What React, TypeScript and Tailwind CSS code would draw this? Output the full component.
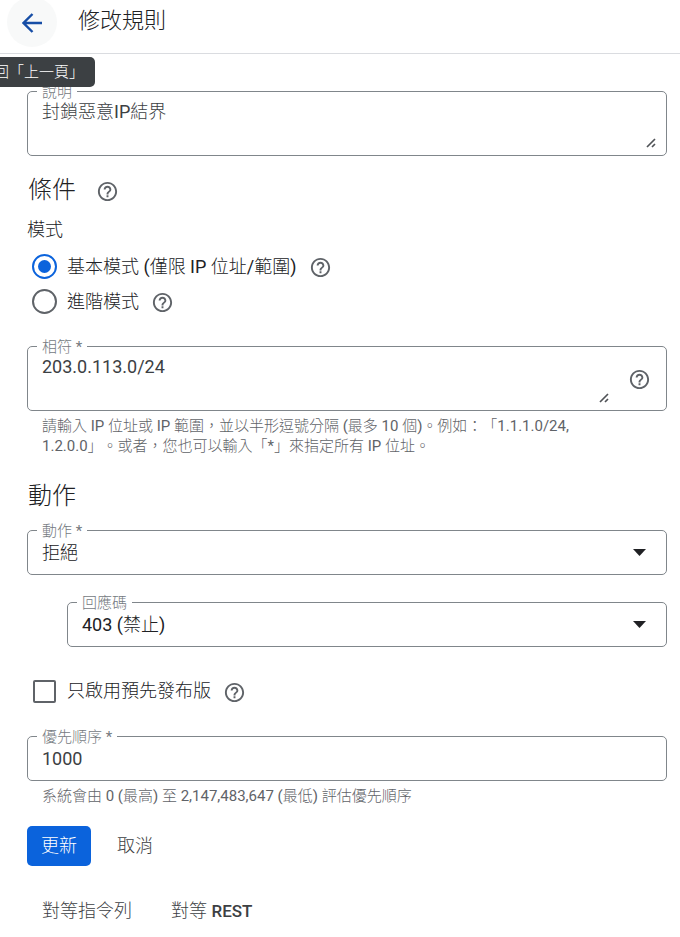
import { useState, type ReactNode } from "react";

function HelpIcon() {
  return (
    <svg viewBox="0 0 24 24" className="size-[23px] fill-[#5f6368]" aria-hidden="true">
      <path d="M11 18h2v-2h-2v2zm1-16C6.48 2 2 6.48 2 12s4.48 10 10 10 10-4.48 10-10S17.52 2 12 2zm0 18c-4.41 0-8-3.59-8-8s3.59-8 8-8 8 3.59 8 8-3.59 8-8 8zm0-14c-2.21 0-4 1.79-4 4h2c0-1.1.9-2 2-2s2 .9 2 2c0 2-3 1.75-3 5h2c0-2.25 3-2.5 3-5 0-2.21-1.79-4-4-4z" />
    </svg>
  );
}

function HelpButton({ label }: { label: string }) {
  return (
    <button type="button" aria-label={label} className="shrink-0 pt-[2px]">
      <HelpIcon />
    </button>
  );
}

function Resizer({ className }: { className: string }) {
  return (
    <svg
      viewBox="0 0 10 10"
      className={`pointer-events-none absolute bottom-[7px] size-[10px] ${className}`}
      aria-hidden="true"
    >
      <path d="M1 9L9 1M6 9L9 6" stroke="#505357" strokeWidth="1.7" fill="none" />
    </svg>
  );
}

function Field({ id, label, children }: { id: string; label: string; children: ReactNode }) {
  return (
    <div className="relative flex rounded-[5px] border border-[#80868b]">
      <label
        htmlFor={id}
        className="absolute -top-[9px] left-[9px] bg-white px-[5px] text-[15px] leading-[18px] text-[#74797e]"
      >
        {label}
      </label>
      {children}
    </div>
  );
}

function SelectField({ id, label, options }: { id: string; label: string; options: string[] }) {
  return (
    <Field id={id} label={label}>
      <select
        id={id}
        className="h-[43px] w-full appearance-none rounded-[5px] bg-transparent px-[14px] text-[18px] text-[#202124] outline-none"
      >
        {options.map((o) => (
          <option key={o}>{o}</option>
        ))}
      </select>
      <svg
        viewBox="0 0 12 6"
        className="pointer-events-none absolute top-[18px] right-5 h-[7px] w-[13px] fill-[#202124]"
        preserveAspectRatio="none"
        aria-hidden="true"
      >
        <path d="M0 0h12L6 6z" />
      </svg>
    </Field>
  );
}

const modes = [
  { id: "basic", label: "基本模式 (僅限 IP 位址/範圍)" },
  { id: "advanced", label: "進階模式" },
];

export default function App() {
  const [mode, setMode] = useState("basic");
  return (
    <div
      lang="zh-Hant"
      className="min-h-screen overflow-hidden bg-white font-[Roboto,'Noto_Sans_CJK_TC_Light','Noto_Sans_CJK_TC',sans-serif] font-normal text-[#202124] [text-spacing-trim:space-all]"
    >
      <header className="relative flex h-[54px] items-start border-b border-[#dadce0] pl-[7px]">
        <button
          type="button"
          aria-label="返回"
          aria-describedby="back-tip"
          className="-mt-[3px] flex size-[50px] items-center justify-center rounded-full bg-[#f8f9f9]"
        >
          <svg viewBox="0 0 20 20" className="mt-px size-5" aria-hidden="true">
            <path d="M20 10H2M10.5 1L1.5 10l9 9" fill="none" stroke="#174ea6" strokeWidth="2.4" />
          </svg>
        </button>
        <h1 className="ml-[21px] text-[22px] leading-[42px]">修改規則</h1>
        <div
          id="back-tip"
          role="tooltip"
          className="absolute top-[57px] -left-[32px] z-10 rounded-[5px] bg-[#3c4043] px-[11px] text-[15px] leading-[30px] whitespace-nowrap text-white"
        >
          返回「上一頁」
        </div>
      </header>

      <form className="pt-[37px] pr-[13px] pb-[14px] pl-[27px]" onSubmit={(e) => e.preventDefault()}>
        <Field id="description" label="說明">
          <textarea
            id="description"
            defaultValue="封鎖惡意IP結界"
            className="h-[63px] w-full resize-none rounded-[5px] bg-transparent px-[14px] pt-2 text-[18px] leading-6 text-[#3c4043] outline-none"
          />
          <Resizer className="right-[10px]" />
        </Field>

        <div className="mt-[19px] flex h-[30px] items-center gap-5 pl-px">
          <h2 className="text-[24px] leading-[30px]">條件</h2>
          <HelpButton label="條件說明" />
        </div>

        <fieldset>
          <legend className="pt-[13px] text-[18px] leading-6">模式</legend>
          <div className="pt-[7px]">
            {modes.map((m) => (
              <div key={m.id} className="flex h-[35px] items-center gap-3 pl-[5px]">
                <label className="flex items-center gap-[10px] text-[18px] leading-6">
                  <input
                    type="radio"
                    name="mode"
                    checked={mode === m.id}
                    onChange={() => setMode(m.id)}
                    className="size-[25px] appearance-none rounded-full border-2 border-[#5f6368] bg-clip-content p-[4px] checked:border-[#0b63dc] checked:bg-[#0b63dc]"
                  />
                  {m.label}
                </label>
                <HelpButton label={`${m.label}說明`} />
              </div>
            ))}
          </div>
        </fieldset>

        <div className="mt-[27px]">
          <Field id="match" label="相符 *">
            <textarea
              id="match"
              defaultValue="203.0.113.0/24"
              className="h-[63px] min-w-0 flex-1 resize-none rounded-[5px] bg-transparent px-[14px] pt-2 text-[18px] leading-6 text-[#3c4043] outline-none"
            />
            <Resizer className="right-[57px]" />
            <div className="flex items-center pr-[15px]">
              <HelpButton label="相符說明" />
            </div>
          </Field>
        </div>
        <p className="mt-[5px] pr-[80px] pl-[15px] text-[15px] leading-5 text-[#5f6368]">
          請輸入 IP 位址或 IP 範圍，並以半形逗號分隔 (最多 10 個)。例如：「1.1.1.0/24, 1.2.0.0」。或者，您也可以輸入「*」來指定所有 IP 位址。
        </p>

        <h2 className="mt-[25px] mb-[19px] pl-px text-[24px] leading-[30px]">動作</h2>
        <SelectField id="action" label="動作 *" options={["拒絕", "允許"]} />
        <div className="mt-[27px] pl-10">
          <SelectField id="code" label="回應碼" options={["403 (禁止)", "404", "502"]} />
        </div>

        <div className="mt-[29px] flex h-[30px] items-center gap-3 pl-[6px]">
          <label className="flex items-center gap-[11px] text-[18px] leading-6">
            <input type="checkbox" className="size-[23px] appearance-none rounded-[2px] border-2 border-[#5f6368] checked:bg-[#0b63dc]" />
            只啟用預先發布版
          </label>
          <HelpButton label="預先發布版說明" />
        </div>

        <div className="mt-[30px]">
          <Field id="priority" label="優先順序 *">
            <input
              id="priority"
              type="text"
              defaultValue="1000"
              className="h-[43px] w-full rounded-[5px] bg-transparent px-[14px] text-[18px] text-[#3c4043] outline-none"
            />
          </Field>
        </div>
        <p className="mt-[5px] pl-[15px] text-[15px] leading-5 text-[#5f6368]">
          系統會由 0 (最高) 至 2,147,483,647 (最低) 評估優先順序
        </p>

        <div className="mt-5 flex gap-3 text-[18px]">
          <button type="submit" className="h-10 rounded-[5px] bg-[#0b63dc] px-[14px] pb-[2px] text-white">
            更新
          </button>
          <button type="button" className="h-10 px-[14px] pb-[2px] text-[#3c4043]">
            取消
          </button>
        </div>

        <div className="mt-[33px] flex gap-[39px] pl-[15px] text-[18px] leading-6 text-[#3c4043]">
          <button type="button">對等指令列</button>
          <button type="button">
            對等 <span className="text-[17px] font-medium">REST</span>
          </button>
        </div>
      </form>
    </div>
  );
}
